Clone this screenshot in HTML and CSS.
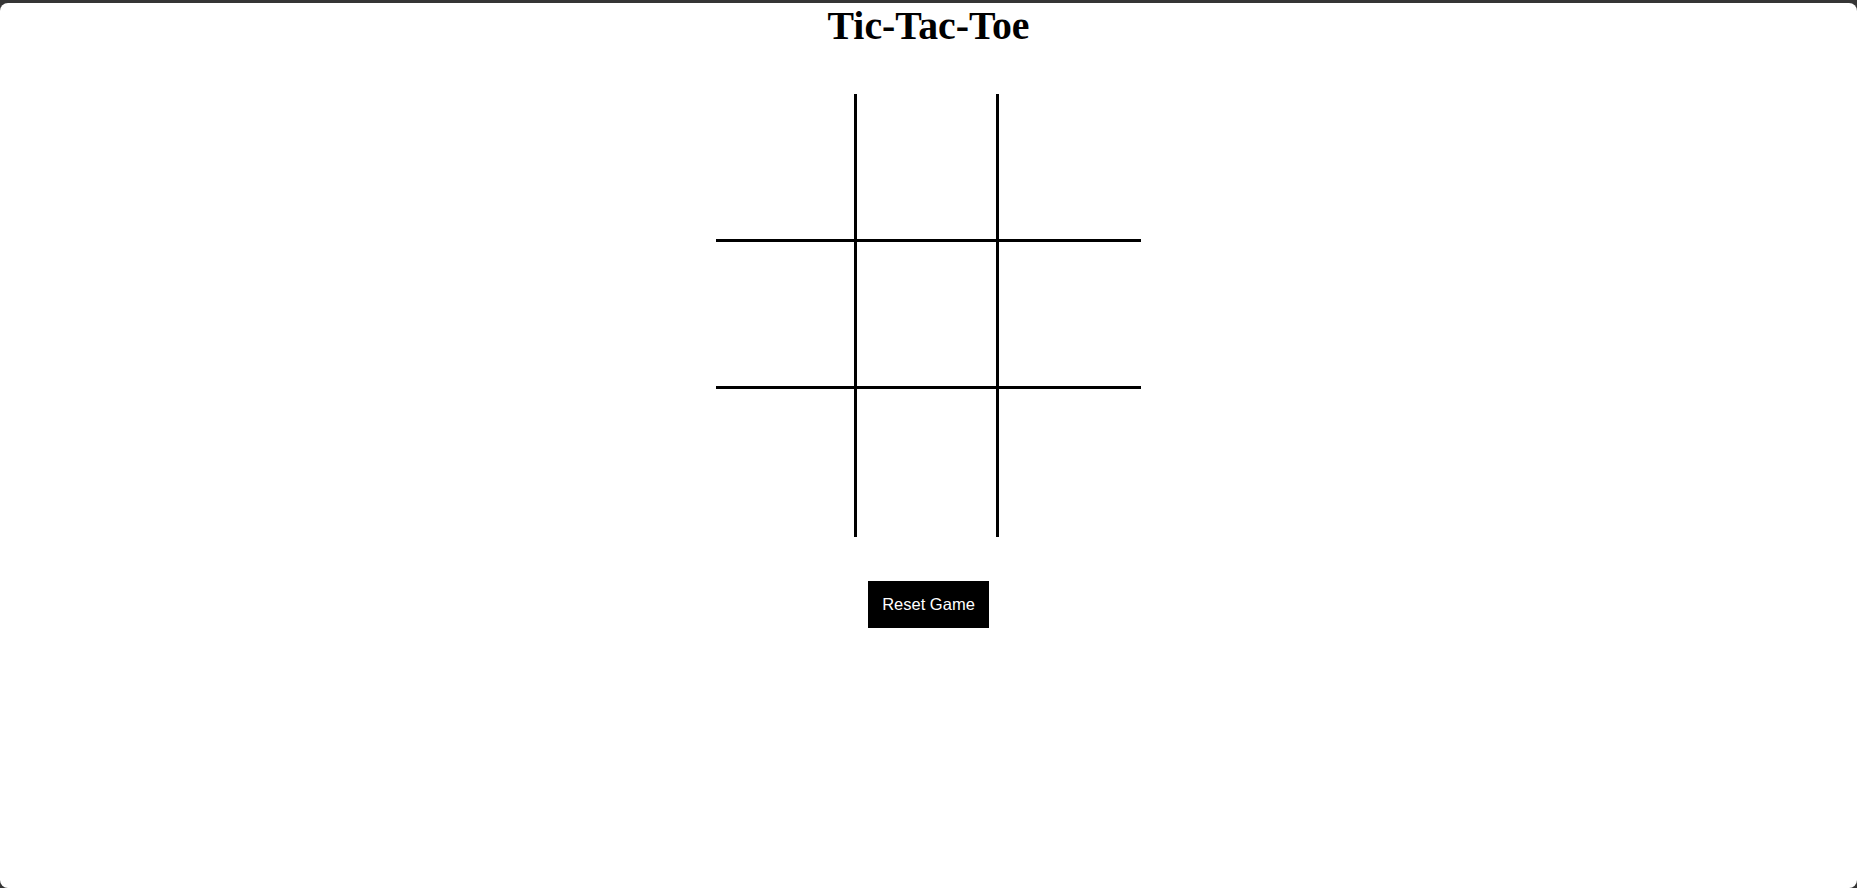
FILE: index.html
```html
<!DOCTYPE html>
<html lang="en">
<head>
<meta charset="utf-8">
<title>Tic-Tac-Toe</title>
<link rel="stylesheet" href="styles.css">
</head>
<body>
<div class="window">
  <h1 class="title">Tic-Tac-Toe</h1>
  <div class="board">
    <div class="cell"></div>
    <div class="cell"></div>
    <div class="cell"></div>
    <div class="cell"></div>
    <div class="cell"></div>
    <div class="cell"></div>
    <div class="cell"></div>
    <div class="cell"></div>
    <div class="cell"></div>
  </div>
  <button class="reset" type="button">Reset Game</button>
</div>
</body>
</html>
```

FILE: styles.css
```css
html {
  background: #353535;
}

body {
  margin: 0;
  height: 888px;
  overflow: hidden;
}

.window {
  margin-top: 3px;
  height: 885px;
  background: #ffffff;
  border-radius: 8px;
  padding-top: 1px;
  box-sizing: border-box;
  display: flex;
  flex-direction: column;
  align-items: center;
}

.title {
  margin: 0;
  font-family: "Liberation Serif", "Times New Roman", serif;
  font-weight: bold;
  font-size: 39.8px;
  line-height: 44px;
  color: #000;
}

.board {
  margin-top: 46px;
  display: grid;
  grid-template-columns: 138px 139px 142px;
  grid-template-rows: 145px 144px 148px;
  gap: 3px;
  background: #000;
}

.cell {
  background: #fff;
}

.reset {
  margin-top: 44px;
  width: 121px;
  height: 47px;
  padding: 0;
  border: none;
  background: #000;
  color: #fff;
  font-family: "Liberation Sans", Arial, sans-serif;
  font-size: 16.5px;
  cursor: pointer;
}
```
